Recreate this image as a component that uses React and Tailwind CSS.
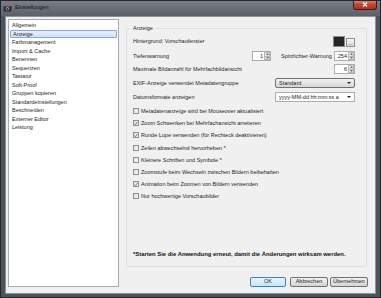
import React from "react";

const items = [
  "Allgemein",
  "Anzeige",
  "Farbmanagement",
  "Import & Cache",
  "Benennen",
  "Sequenzen",
  "Tastatur",
  "Soft-Proof",
  "Gruppen kopieren",
  "Standardeinstellungen",
  "Beschneiden",
  "Externer Editor",
  "Leistung",
];

const checks = [
  ["Metadatenanzeige wird bei Mouseover aktualisiert", false],
  ["Zoom  Schwenken bei Mehrfachansicht arretieren", true],
  ["Runde Lupe verwenden (für Rechteck deaktivieren)", true],
  ["Zeilen abwechselnd hervorheben *", false],
  ["Kleinere Schriften und Symbole *", false],
  ["Zoomstufe beim Wechseln zwischen Bildern beibehalten", false],
  ["Animation beim Zoomen von Bildern verwenden", true],
  ["Nur hochwertige Vorschaubilder", false],
];

function Arrow({ up }) {
  return (
    <svg width="3" height="2" viewBox="0 0 4 2" className="block">
      {up ? <path d="M0 2 L2 0 L4 2 Z" fill="#4a4a4a" /> : <path d="M0 0 L2 2 L4 0 Z" fill="#4a4a4a" />}
    </svg>
  );
}

function Spin({ value, w }) {
  return (
    <div className={`flex h-[10px] border border-[#abadb3] bg-white ${w}`}>
      <div className="flex-1 text-right pr-[1px] leading-[8px]">{value}</div>
      <div className="w-[6px] flex flex-col">
        <div className="flex-1 flex items-center justify-center bg-gradient-to-b from-[#f4f4f4] to-[#dedede] border border-[#b8b8b8]">
          <Arrow up />
        </div>
        <div className="flex-1 flex items-center justify-center bg-gradient-to-b from-[#f4f4f4] to-[#dedede] border border-t-0 border-[#b8b8b8]">
          <Arrow />
        </div>
      </div>
    </div>
  );
}

function Check({ checked }) {
  return (
    <div className="w-[6px] h-[6px] border border-[#8e8f8f] bg-gradient-to-br from-[#dcdcdc] to-[#fbfbfb] flex items-center justify-center shrink-0">
      {checked && (
        <svg width="5" height="5" viewBox="0 0 5 5" className="block">
          <path d="M0.8 2.6 L2 3.9 L4.3 0.7" stroke="#2b4f8f" strokeWidth="0.9" fill="none" />
        </svg>
      )}
    </div>
  );
}

function Btn({ children, w, primary }) {
  return (
    <div
      className={`${w} h-[10px] rounded-[2px] border flex items-center justify-center leading-none ${
        primary
          ? "border-[#3c7fb1] bg-gradient-to-b from-[#eaf6fd] to-[#bee6fd]"
          : "border-[#707070] bg-gradient-to-b from-[#f2f2f2] to-[#d4d4d4]"
      }`}
    >
      {children}
    </div>
  );
}

export default function App() {
  return (
    <div className="w-[381px] h-[298px] flex flex-col bg-[#4c535b] border border-[#23282d] font-['Liberation_Sans',Arial,sans-serif] text-[5.5px] text-[#1e1e1e] overflow-hidden">
      {/* title bar */}
      <div className="h-[16px] flex items-start bg-gradient-to-b from-[#7c8187] to-[#596067] -mx-px -mt-px">
        <div className="flex items-center h-[15px] pl-[3px]">
          <svg width="9" height="8" viewBox="0 0 9 8" className="block">
            <rect x="0.5" y="2" width="8" height="5.5" rx="1" fill="#2a2d33" />
            <rect x="1" y="1" width="2.5" height="1.5" fill="#3b7dd8" />
            <rect x="4" y="0.5" width="3" height="2" fill="#e0483c" />
            <circle cx="4.5" cy="4.8" r="1.8" fill="#8aa3c4" />
            <circle cx="4.5" cy="4.8" r="0.9" fill="#1b1e22" />
          </svg>
          <span className="ml-[3px] text-[#111] text-[5.6px]">Einstellungen</span>
        </div>
        <div className="ml-auto mr-[4px] w-[24px] h-[10px] rounded-b-[3px] border border-t-0 border-[#3b1a17] bg-gradient-to-b from-[#e08a7e] via-[#c74335] to-[#b5301f] flex items-center justify-center">
          <svg width="6" height="5" viewBox="0 0 6 5" className="block">
            <path d="M1 0.5 L5 4.5 M5 0.5 L1 4.5" stroke="#ffffff" strokeWidth="1.2" />
          </svg>
        </div>
      </div>

      {/* client */}
      <div className="flex-1 mx-[4px] mb-[3px] bg-[#f0f0f0] border border-[#8a929a] flex">
        {/* list */}
        <div className="ml-[2px] mt-[2px] w-[111px] h-[268px] bg-white border border-[#a9acb2] pt-px px-px">
          {items.map((t, i) => (
            <div
              key={t}
              className={`h-[8.5px] flex items-center pl-[2px] ${
                i === 1 ? "bg-gradient-to-b from-[#e6f0fb] to-[#cfe2f8] border border-[#85aad8] rounded-[1px]" : ""
              }`}
            >
              {t}
            </div>
          ))}
        </div>

        {/* right column */}
        <div className="ml-[7px] w-[246px] flex flex-col">
          <div className="mt-[11px] w-[241px] h-[239px] border border-[#d5dfe5] rounded-[2px] relative px-[6px] pt-[6px] flex flex-col">
            <div className="absolute left-[4px] -top-[4px] px-[2px] bg-[#f0f0f0] leading-[7px]">Anzeige</div>

            <div className="h-[12px] flex items-center pr-[5px]">
              <span className="flex-1">Hintergrund: Vorschaufenster</span>
              <div className="w-[12px] h-[11px] border border-[#8a8a8a] bg-[#262626]" />
              <div className="ml-px w-[9px] h-[9px] mt-[2px] border border-[#8e8f8f] bg-gradient-to-b from-[#f6f6f6] to-[#dadada] flex items-end justify-center leading-[6px] text-[5px]">
                ...
              </div>
            </div>

            <div className="mt-[3px] h-[12px] flex items-center pr-[5px]">
              <span className="flex-1">Tiefenwarnung</span>
              <Spin value="1" w="w-[19px]" />
              <span className="w-[63px] pl-[10px]">Spitzlichter-Warnung</span>
              <Spin value="254" w="w-[21px]" />
            </div>

            <div className="mt-px h-[12px] flex items-center pr-[5px]">
              <span className="flex-1">Maximale Bildanzahl für Mehrfachbildansicht</span>
              <Spin value="6" w="w-[21px]" />
            </div>

            <div className="mt-[2px] h-[12px] flex items-center pr-[5px]">
              <span className="flex-1">EXIF-Anzeige verwendet Metadatengruppe</span>
              <div className="w-[80px] h-[10px] rounded-[2px] border border-[#707070] bg-gradient-to-b from-[#f2f2f2] to-[#d6d6d6] flex items-center pl-[3px] pr-[3px]">
                <span className="flex-1">Standard</span>
                <svg width="4" height="2" viewBox="0 0 4 2" className="block">
                  <path d="M0 0 L2 2 L4 0 Z" fill="#222" />
                </svg>
              </div>
            </div>

            <div className="mt-[2px] h-[12px] flex items-center pr-[5px]">
              <span className="flex-1">Datumsformate anzeigen</span>
              <div className="w-[80px] h-[10px] border border-[#abadb3] bg-white flex items-center pl-[3px] pr-[3px]">
                <span className="flex-1">yyyy-MM-dd hh:mm:ss a</span>
                <svg width="4" height="2" viewBox="0 0 4 2" className="block">
                  <path d="M0 0 L2 2 L4 0 Z" fill="#222" />
                </svg>
              </div>
            </div>

            <div className="mt-[2px] flex flex-col">
              {checks.map(([t, c]) => (
                <div key={t} className="h-[12.2px] flex items-center">
                  <Check checked={c} />
                  <span className="ml-[2px]">{t}</span>
                </div>
              ))}
            </div>

            <div className="mt-auto mb-[6px] h-[12px] flex items-center font-bold text-[5.9px] text-[#111]">
              *Starten Sie die Anwendung erneut, damit die Änderungen wirksam werden.
            </div>
          </div>

          <div className="mt-[10px] flex justify-end pr-[4px]">
            <Btn w="w-[36px]" primary>OK</Btn>
            <div className="w-[4px]" />
            <Btn w="w-[38px]">Abbrechen</Btn>
            <div className="w-[2px]" />
            <Btn w="w-[38px]">Übernehmen</Btn>
          </div>
        </div>
      </div>
    </div>
  );
}
